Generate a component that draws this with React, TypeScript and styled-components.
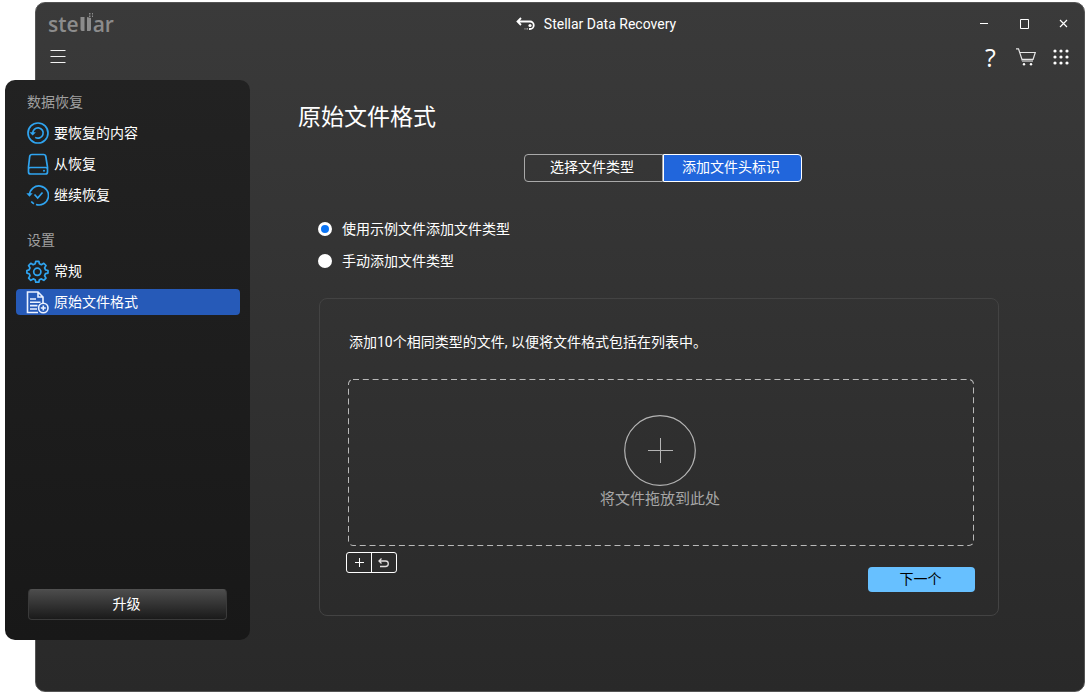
import React, { useState } from "react";
import styled, { createGlobalStyle } from "styled-components";

const GlobalStyle = createGlobalStyle`
  *, *::before, *::after { box-sizing: border-box; }
  body {
    margin: 0;
    background: #ffffff;
    color: #ffffff;
    font-family: Roboto, "Noto Sans CJK SC", sans-serif;
    font-size: 14px;
    line-height: 20px;
  }
  button, input { font: inherit; color: inherit; margin: 0; }
  button { cursor: pointer; }
  svg { display: block; flex: none; }
`;

const Page = styled.div`
  display: flex;
  min-height: 100vh;
  padding: 2px 7px 2px 35px;
`;

const AppWindow = styled.div`
  flex: 1;
  min-width: 0;
  display: flex;
  flex-direction: column;
  border: 1px solid #545454;
  border-radius: 10px;
  background: linear-gradient(#3a3a3a, #343434 35%, #292929);
`;

const TitleBar = styled.header`
  display: flex;
  align-items: center;
  height: 42px;
`;

const Logo = styled.div`
  display: flex;
  align-items: baseline;
  width: 192px;
  padding-left: 12px;
  color: #8c8c8c;
  font-family: "Open Sans", sans-serif;
  font-size: 21px;
  font-weight: 600;
  line-height: 24px;
`;

const AppTitle = styled.h1`
  flex: 1;
  display: flex;
  align-items: center;
  justify-content: center;
  gap: 9px;
  margin: 0;
  font-size: 14px;
  font-weight: 400;
`;

const IconGroup = styled.div`
  display: flex;
`;

const IconButton = styled.button<{ $width: number }>`
  display: flex;
  align-items: center;
  justify-content: center;
  width: ${(p) => p.$width}px;
  height: 28px;
  padding: 0;
  border: 0;
  background: none;
`;

const HelpButton = styled(IconButton)`
  font-family: "Open Sans", sans-serif;
  font-size: 25px;
  font-weight: 400;
`;

const Toolbar = styled.div`
  display: flex;
  align-items: center;
  justify-content: space-between;
  height: 24px;
  padding: 0 6px 0 5px;
`;

const Body = styled.div`
  flex: 1;
  display: flex;
  margin-top: 11px;
`;

const Sidebar = styled.nav`
  display: flex;
  flex-direction: column;
  flex: none;
  width: 245px;
  margin: 0 0 51px -31px;
  padding: 12px 10px 20px 11px;
  border-radius: 10px;
  background: linear-gradient(#222222, #181818);
`;

const GroupLabel = styled.h2`
  margin: 0 0 8px;
  padding-left: 11px;
  color: #a0a0a0;
  font-size: 14px;
  font-weight: 400;
`;

const NavList = styled.ul`
  display: grid;
  gap: 5px;
  margin: 0 0 22px;
  padding: 0;
  list-style: none;
`;

const NavItem = styled.a<{ $active?: boolean }>`
  display: flex;
  align-items: center;
  gap: 5px;
  height: 26px;
  padding-left: 10px;
  border-radius: 4px;
  background: ${(p) => (p.$active ? "#265ab8" : "transparent")};
  color: #ffffff;
  text-decoration: none;
`;

const UpgradeButton = styled.button`
  height: 31px;
  margin: auto 13px 0 12px;
  padding: 0 2px 2px 0;
  border: 1px solid #3a3a3a;
  border-top-color: #505050;
  border-radius: 4px;
  background: linear-gradient(#4c4c4c, #1a1a1a);
`;

const Main = styled.main`
  flex: 1;
  min-width: 0;
  padding: 22px 57px 24px 48px;
`;

const Heading = styled.h2`
  margin: 0 0 20px;
  font-size: 23px;
  font-weight: 400;
  line-height: 32px;
`;

const Tabs = styled.div`
  display: flex;
  justify-content: center;
`;

const Tab = styled.button<{ $active: boolean }>`
  width: 139px;
  height: 28px;
  padding: 0 2px 2px 0;
  border: 1px solid ${(p) => (p.$active ? "#ffffff" : "#a9a9a9")};
  background: ${(p) => (p.$active ? "#2166dc" : "transparent")};

  &:first-child { border-radius: 4px 0 0 4px; }
  &:last-child { border-radius: 0 4px 4px 0; }
`;

const Options = styled.fieldset`
  display: grid;
  gap: 12px;
  margin: 37px 0 27px 20px;
  padding: 0;
  border: 0;
`;

const Option = styled.label`
  display: flex;
  align-items: center;
  gap: 10px;
  width: fit-content;
`;

const Radio = styled.input`
  appearance: none;
  width: 14px;
  height: 14px;
  border: 3px solid #ffffff;
  border-radius: 50%;
  background: #ffffff;

  &:checked { background: #0a74f5; }
`;

const Card = styled.section`
  margin: 0 28px 0 21px;
  padding: 33px 24px 23px 28px;
  border: 1px solid #434343;
  border-radius: 8px;
`;

const Hint = styled.p`
  margin: 0 0 27px 1px;
`;

const DropZone = styled.div`
  position: relative;
  display: flex;
  flex-direction: column;
  align-items: center;
  gap: 2px;
  height: 167px;
  padding: 36px 2px 0 0;
  color: #a6a6a6;
  font-size: 15px;
  line-height: 22px;
`;

const DashedOutline = styled.svg`
  position: absolute;
  inset: 0;
  width: 100%;
  height: 100%;
  border-radius: 5px;
`;

const CardFooter = styled.div`
  display: flex;
  justify-content: space-between;
  align-items: flex-start;
  margin: 6px 0 0 -2px;
`;

const FileActions = styled.div`
  display: flex;
  height: 21px;
  border: 1px solid #ffffff;
  border-radius: 3px;
`;

const FileAction = styled.button`
  display: flex;
  align-items: center;
  justify-content: center;
  width: 24px;
  padding: 0;
  border: 0;
  background: none;

  & + & {
    width: 25px;
    border-left: 1px solid #ffffff;
  }
`;

const NextButton = styled.button`
  width: 107px;
  height: 25px;
  margin: 15px -1px 0 0;
  padding: 0 2px 2px 0;
  border: 0;
  border-radius: 4px;
  background: #67c0ff;
  color: #000000;
`;

const blue = "#2fa4f0";

const LogoBars = () => (
  <svg width="14" height="19" viewBox="0 0 14 19" fill="#8c8c8c">
    <path d="M1.500 4h4v14H3q-1.500 0-1.500-2zM8 4l4 1v11.500L11.200 18H8z" />
    <path d="M10 0h1.500v1.500H10zM13 0h1v1.500h-1zM10 2.500h1.500V4H10zM13 2.500h1V4h-1z" />
  </svg>
);

const AppIcon = () => (
  <svg width="19" height="14" viewBox="0 0 19 14" fill="none" stroke="#fff" strokeWidth="1.800">
    <path d="M5 1 1.500 4.500 5 8M2 4.500h12a3.700 3.700 0 0 1 0 7.500H13" />
    <circle cx="14" cy="8.500" r="1.600" fill="#fff" stroke="none" />
    <path d="M8.500 11.800h1M10.500 11.800h1.500" stroke="#bbb" strokeWidth="1.200" />
  </svg>
);

const MinimizeIcon = () => (
  <svg width="10" height="12" viewBox="0 0 10 12" stroke="#fff">
    <path d="M1 5.500h8" />
  </svg>
);

const MaximizeIcon = () => (
  <svg width="10" height="10" viewBox="0 0 10 10" fill="none" stroke="#fff">
    <path d="M1.500.5h8v9h-8z" />
  </svg>
);

const CloseIcon = () => (
  <svg width="10" height="10" viewBox="0 0 10 10" stroke="#fff" strokeWidth="1.200">
    <path d="m1 1 7 7M8 1l-7 7" />
  </svg>
);

const MenuIcon = () => (
  <svg width="16" height="14" viewBox="0 0 16 14" stroke="#f2f2f2">
    <path d="M.5.5h15M.5 6.500h15M.5 12.500h15" strokeWidth="1.200" />
  </svg>
);

const CartIcon = () => (
  <svg width="20" height="18" viewBox="0 0 20 18" fill="none" stroke="#e4e4e4" strokeWidth="1.200">
    <path d="M0 .8h2.500L6.500 13M4 4.500h15.300l-2.200 6.800H6" />
    <path d="M6 13h11" stroke="#999" strokeWidth="2" />
    <circle cx="8" cy="16.200" r="1.200" fill="#fff" stroke="none" />
    <circle cx="15" cy="16.200" r="1.200" fill="#fff" stroke="none" />
  </svg>
);

const GridIcon = () => (
  <svg width="16" height="16" viewBox="0 0 16 16" fill="#fff">
    {[2, 8, 14].map((y) => [2, 8, 14].map((x) => <circle key={`${x}-${y}`} cx={x} cy={y} r="1.600" />))}
  </svg>
);

const RestoreIcon = () => (
  <svg width="23" height="23" viewBox="0 0 23 23" fill="none" stroke={blue} strokeWidth="1.700">
    <circle cx="12" cy="11" r="10" />
    <path d="M6.800 11.500a5.200 5.200 0 1 1 2.400 3.900" />
    <path d="m3.500 10.200 3.200 3.200 3.200-3.200z" fill={blue} stroke="none" />
  </svg>
);

const DriveIcon = () => (
  <svg width="23" height="23" viewBox="0 0 23 23" fill="none" stroke={blue} strokeWidth="1.700">
    <path d="M6 1.500h11.500q2 0 2.300 2l1.700 10.500v5q0 2-2 2h-15q-2 0-2-2v-5L3.700 3.500q.3-2 2.300-2zM2.500 16q0-1.500 2-1.500h15q2 0 2 1.500" />
    <circle cx="18" cy="17.800" r="1" fill={blue} stroke="none" />
  </svg>
);

const ResumeIcon = () => (
  <svg width="23" height="23" viewBox="0 0 23 23" fill="none" stroke={blue} strokeWidth="1.700">
    <path d="M3.500 11A9.500 9.500 0 1 1 10 20.500M5.300 17.500q1.300 1.500 2.700 2.200M8.500 10.500l3.200 3.500 4.800-5.500" />
    <path d="M.3 9.200h6.400l-3.200 3.600z" fill={blue} stroke="none" />
  </svg>
);

const GearIcon = () => (
  <svg width="23" height="23" viewBox="0 0 23 23" fill="none" stroke={blue} strokeWidth="1.700" strokeLinejoin="round">
    <path d="M9.800 1.300h3l.6 2.500 2 .9 2.400-1.400 2.200 2.200-1.400 2.400.9 2 2.500.6v2.600l-2.500.6-.9 2 1.400 2.400-2.200 2.200-2.400-1.400-2 .9-.6 2.400h-3l-.6-2.400-2-.9-2.400 1.400-2.200-2.200L4 15.700l-.9-2-2.200-.6v-2.600l2.200-.6.9-2-1.400-2.400 2.200-2.200 2.400 1.400 2-.9z" />
    <circle cx="11.300" cy="11.800" r="3.600" />
  </svg>
);

const FileFormatIcon = () => (
  <svg width="23" height="23" viewBox="0 0 23 23" fill="none" stroke="#eaf1ff" strokeWidth="1.600">
    <path d="M12 21.500H1.500V1H12l5 5v7M12 1v5h5M4 8h6M4 11.300h10.500M4 14.600h7.500M4 18h7" />
    <circle cx="17.300" cy="17" r="4.700" />
    <path d="M17.300 14.500v5M14.800 17h5" />
  </svg>
);

const AddCircleIcon = () => (
  <svg width="72" height="71" viewBox="0 0 72 71" fill="none" stroke="#b4b4b4">
    <ellipse cx="36" cy="35.500" rx="35.300" ry="34.800" strokeWidth="1.200" />
    <path d="M36.500 23v25M24 35.500h25" />
  </svg>
);

const PlusIcon = () => (
  <svg width="11" height="11" viewBox="0 0 11 11" stroke="#fff">
    <path d="M5.500 1v9M1 5.500h9" />
  </svg>
);

const UndoIcon = () => (
  <svg width="12" height="10" viewBox="0 0 12 10" fill="none" stroke="#e2dede" strokeWidth="1.300">
    <path d="M3.500.5 1 3l2.500 2.500M1 3h6.500q2.800 0 2.800 2.700T7.500 8.500H2" />
  </svg>
);

const recoveryItems = [
  { label: "要恢复的内容", Icon: RestoreIcon },
  { label: "从恢复", Icon: DriveIcon },
  { label: "继续恢复", Icon: ResumeIcon },
];

const settingItems = [
  { label: "常规", Icon: GearIcon, active: false },
  { label: "原始文件格式", Icon: FileFormatIcon, active: true },
];

const tabs = ["选择文件类型", "添加文件头标识"];
const methods = ["使用示例文件添加文件类型", "手动添加文件类型"];

export default function App() {
  const [tab, setTab] = useState(1);
  const [method, setMethod] = useState(0);

  return (
    <Page>
      <GlobalStyle />
      <AppWindow>
        <TitleBar>
          <Logo>
            ste
            <LogoBars />
            ar
          </Logo>
          <AppTitle>
            <AppIcon />
            Stellar Data Recovery
          </AppTitle>
          <IconGroup>
            <IconButton $width={40} aria-label="最小化"><MinimizeIcon /></IconButton>
            <IconButton $width={40} aria-label="最大化"><MaximizeIcon /></IconButton>
            <IconButton $width={40} aria-label="关闭"><CloseIcon /></IconButton>
          </IconGroup>
        </TitleBar>
        <Toolbar>
          <IconButton $width={34} aria-label="菜单"><MenuIcon /></IconButton>
          <IconGroup>
            <HelpButton $width={35}>?</HelpButton>
            <IconButton $width={35} aria-label="购物车"><CartIcon /></IconButton>
            <IconButton $width={35} aria-label="更多"><GridIcon /></IconButton>
          </IconGroup>
        </Toolbar>
        <Body>
          <Sidebar>
            <GroupLabel>数据恢复</GroupLabel>
            <NavList>
              {recoveryItems.map(({ label, Icon }) => (
                <li key={label}>
                  <NavItem href="#"><Icon />{label}</NavItem>
                </li>
              ))}
            </NavList>
            <GroupLabel>设置</GroupLabel>
            <NavList>
              {settingItems.map(({ label, Icon, active }) => (
                <li key={label}>
                  <NavItem href="#" $active={active}><Icon />{label}</NavItem>
                </li>
              ))}
            </NavList>
            <UpgradeButton>升级</UpgradeButton>
          </Sidebar>
          <Main>
            <Heading>原始文件格式</Heading>
            <Tabs>
              {tabs.map((label, i) => (
                <Tab key={label} $active={tab === i} onClick={() => setTab(i)}>{label}</Tab>
              ))}
            </Tabs>
            <Options>
              {methods.map((label, i) => (
                <Option key={label}>
                  <Radio type="radio" name="method" checked={method === i} onChange={() => setMethod(i)} />
                  {label}
                </Option>
              ))}
            </Options>
            <Card>
              <Hint>添加10个相同类型的文件, 以便将文件格式包括在列表中。</Hint>
              <DropZone>
                <DashedOutline>
                  <rect width="100%" height="100%" rx="5" fill="none" stroke="#b9b9b9" strokeWidth="2" strokeDasharray="6 3.800" />
                </DashedOutline>
                <AddCircleIcon />
                将文件拖放到此处
              </DropZone>
              <CardFooter>
                <FileActions>
                  <FileAction aria-label="添加"><PlusIcon /></FileAction>
                  <FileAction aria-label="撤销"><UndoIcon /></FileAction>
                </FileActions>
                <NextButton>下一个</NextButton>
              </CardFooter>
            </Card>
          </Main>
        </Body>
      </AppWindow>
    </Page>
  );
}
